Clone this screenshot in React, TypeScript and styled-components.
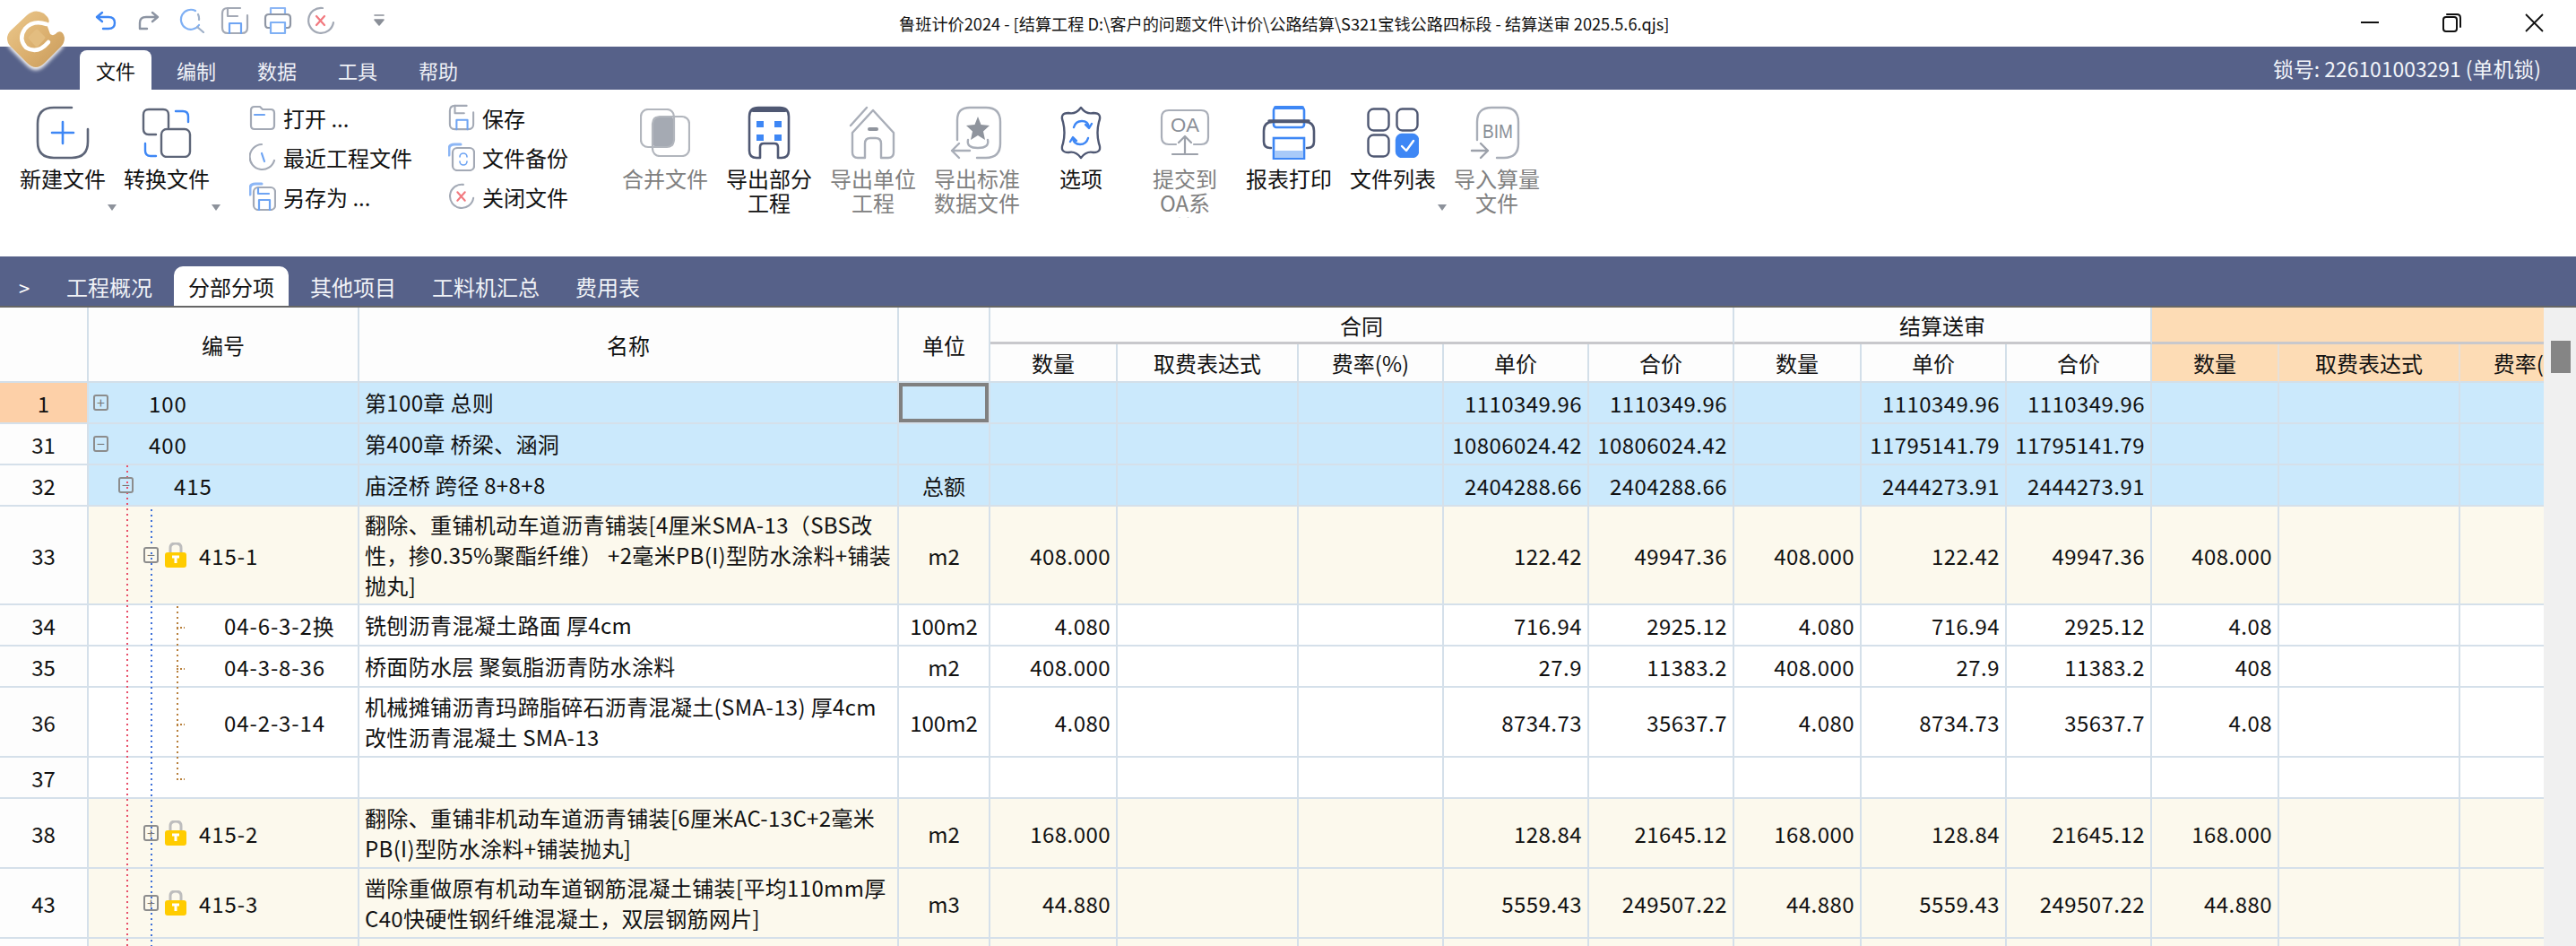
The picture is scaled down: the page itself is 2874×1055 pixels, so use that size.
import React from "react";
import styled, { createGlobalStyle } from "styled-components";

const BAR = "#566189";
const INK = "#5d6578";
const SOFT = "#a9aeb8";
const BLUE = "#3e87f5";
const FONT = `"Noto Sans CJK SC", "Liberation Sans", sans-serif`;
const COLS = "99px 302px 602px 102px 142px 202px 162px 162px 162px 142px 162px 162px 142px 202px 162px";

const Global = createGlobalStyle`
  html, body { margin: 0; padding: 0; background: #fff; overflow: hidden; }
  * { box-sizing: border-box; }
`;

const Page = styled.div`
  position: relative;
  width: 2874px;
  height: 1055px;
  overflow: hidden;
  font-family: ${FONT};
  color: #111;
  display: flex;
  flex-direction: column;
`;

const Glyph = styled.svg`
  display: block;
  flex: none;
  fill: none;
  stroke-linecap: round;
  stroke-linejoin: round;
`;

const LogoMark = styled.svg`
  position: absolute;
  left: 0;
  top: 0;
  z-index: 3;
  filter: drop-shadow(0 3px 2px #fff);
`;

const TitleBar = styled.div`
  height: 52px;
  flex: none;
  display: flex;
  align-items: center;
  background: #fff;
`;
const QuickBar = styled.div`
  width: 1003px;
  flex: none;
  display: flex;
  align-items: center;
  padding: 0 0 6px 94px;
`;
const QuickSlot = styled.div`
  width: 48px;
  display: flex;
  justify-content: center;
`;
const QuickMore = styled.div`
  margin-left: 35px;
`;
const Title = styled.div`
  flex: 1;
  font-size: 18.2px;
  white-space: nowrap;
  color: #111;
  padding-bottom: 1px;
`;
const WindowControls = styled.div`
  display: flex;
  align-items: center;
  gap: 71px;
  padding: 0 36px 2px 0;
`;

const MenuBar = styled.div`
  height: 48px;
  flex: none;
  background: ${BAR};
  display: flex;
  align-items: flex-end;
  padding-left: 89px;
`;
const MenuTab = styled.div<{ $active?: boolean }>`
  width: 80px;
  height: 44px;
  margin-right: 10px;
  display: flex;
  align-items: center;
  justify-content: center;
  font-size: 22px;
  border-radius: 8px 8px 0 0;
  color: ${(p) => (p.$active ? "#111" : "#eef0f6")};
  background: ${(p) => (p.$active ? "#fff" : "transparent")};
`;
const LockNo = styled.div`
  margin-left: auto;
  height: 48px;
  display: flex;
  align-items: center;
  padding: 0 39px 0 0;
  color: #f2f5fa;
  font-size: 22.9px;
  white-space: nowrap;
`;

const Ribbon = styled.div`
  height: 186px;
  flex: none;
  background: #fff;
  display: flex;
  padding-left: 12px;
`;
const BigButton = styled.div<{ $off?: boolean }>`
  position: relative;
  width: 116px;
  flex: none;
  padding-top: 18px;
  display: flex;
  flex-direction: column;
  align-items: center;
  color: ${(p) => (p.$off ? "#808080" : "#111")};
`;
const BigIcon = styled.div`
  height: 59px;
  display: flex;
  align-items: center;
  justify-content: center;
`;
const BigLabel = styled.div<{ $w?: number; $clip?: boolean }>`
  width: ${(p) => p.$w ?? 100}px;
  margin-top: 8px;
  font-size: 24px;
  line-height: 27px;
  text-align: center;
  ${(p) => (p.$clip ? "height: 58px; overflow: hidden;" : "")}
`;
const Caret = styled.div`
  position: absolute;
  right: -2px;
  top: 128px;
  width: 0;
  height: 0;
  border-left: 5px solid transparent;
  border-right: 5px solid transparent;
  border-top: 7px solid #8d929b;
`;
const SmallColumn = styled.div<{ $w: number; $ml?: number }>`
  width: ${(p) => p.$w}px;
  margin-left: ${(p) => p.$ml ?? 0}px;
  flex: none;
  padding-top: 9px;
  display: flex;
  flex-direction: column;
`;
const SmallItem = styled.div`
  height: 44px;
  display: flex;
  align-items: center;
  gap: 8px;
  font-size: 24px;
  white-space: nowrap;
`;

const TabBar = styled.div`
  height: 57px;
  flex: none;
  background: ${BAR};
  border-bottom: 2px solid #666;
  display: flex;
  align-items: flex-end;
  gap: 8px;
  padding-left: 21px;
`;
const TabChevron = styled.div`
  width: 29px;
  height: 42px;
  color: #fff;
  font-size: 22px;
  display: flex;
  align-items: center;
`;
const SheetTab = styled.div<{ $active?: boolean }>`
  height: 44px;
  padding: 0 16px;
  display: flex;
  align-items: center;
  font-size: 24px;
  border-radius: 10px 10px 0 0;
  color: ${(p) => (p.$active ? "#111" : "#f0f2f7")};
  background: ${(p) => (p.$active ? "#fff" : "transparent")};
`;

const Workspace = styled.div`
  flex: 1;
  min-height: 0;
  display: flex;
`;
const Sheet = styled.div`
  width: 2838px;
  flex: none;
  overflow: hidden;
  background: #fff;
`;
const Scrollbar = styled.div`
  flex: 1;
  background: #f0f0f0;
  padding: 37px 6px 0 8px;
`;
const Thumb = styled.div`
  height: 36px;
  background: #858585;
`;

const HeaderGrid = styled.div`
  width: 2907px;
  height: 84px;
  display: grid;
  grid-template-columns: ${COLS};
  grid-template-rows: 41px 43px;
`;
const HeadCell = styled.div<{ $col: string; $row: string; $tone?: "peach"; $group?: boolean }>`
  grid-column: ${(p) => p.$col};
  grid-row: ${(p) => p.$row};
  display: flex;
  align-items: center;
  justify-content: center;
  font-size: 24px;
  white-space: nowrap;
  background: ${(p) => (p.$tone === "peach" ? "#fddcb5" : "#fdfdfd")};
  border-right: 2px solid ${(p) => (p.$tone === "peach" ? "#e7e0d8" : "#d3dfe9")};
  border-bottom: ${(p) => (p.$group ? "3px solid #c8c8cc" : "2px solid #d3dfe9")};
`;

const Rows = styled.div`
  position: relative;
  width: 2907px;
`;
const Row = styled.div<{ $h: number }>`
  display: grid;
  grid-template-columns: ${COLS};
  height: ${(p) => p.$h}px;
`;
const TONES = { blue: "#cbe9fc", cream: "#fcf9ed", white: "#ffffff" };
type Tone = keyof typeof TONES;
const Cell = styled.div<{ $tone: Tone }>`
  position: relative;
  min-width: 0;
  background: ${(p) => TONES[p.$tone]};
  border-right: 2px solid #d5e0ea;
  border-bottom: 2px solid #d5e0ea;
  font-size: 24px;
  white-space: nowrap;
  display: flex;
  align-items: center;
`;
const IndexCell = styled(Cell)<{ $picked?: boolean }>`
  justify-content: center;
  background: ${(p) => (p.$picked ? "#fdd0a8" : "#fdfdfd")};
`;
const CodeCell = styled(Cell)<{ $level: number }>`
  padding-left: ${(p) => 5 + p.$level * 28}px;
`;
const Toggle = styled.div<{ $hidden?: boolean }>`
  position: relative;
  z-index: 2;
  width: 17px;
  height: 18px;
  flex: none;
  margin-right: 7px;
  border: 2px solid ${(p) => (p.$hidden ? "transparent" : "#8c8c8c")};
  border-radius: 3px;
  color: #777;
  font-size: 16px;
  line-height: 13px;
  text-align: center;
`;
const LockSlot = styled.div`
  position: relative;
  z-index: 2;
  width: 24px;
  height: 28px;
  flex: none;
  margin-right: 14px;
`;
const Code = styled.span`
  position: relative;
  z-index: 2;
  letter-spacing: 0.9px;
`;
const NameCell = styled(Cell)`
  flex-direction: column;
  align-items: flex-start;
  justify-content: center;
  padding-left: 6px;
  overflow: hidden;
`;
const NameLine = styled.div`
  line-height: 34px;
  letter-spacing: 0.35px;
`;
const UnitCell = styled(Cell)<{ $focus?: boolean }>`
  justify-content: center;
  box-shadow: ${(p) => (p.$focus ? "inset 0 0 0 4px #808080" : "none")};
`;
const NumCell = styled(Cell)`
  justify-content: flex-end;
  padding-right: 6px;
  letter-spacing: 0.45px;
`;
const Guide = styled.div<{ $x: number; $top: number; $h: number; $c: string }>`
  position: absolute;
  z-index: 1;
  left: ${(p) => p.$x}px;
  top: ${(p) => p.$top}px;
  width: 2px;
  height: ${(p) => p.$h}px;
  background: repeating-linear-gradient(to bottom, ${(p) => p.$c} 0 2px, transparent 2px 6px);
`;
const GuideTick = styled.div<{ $top: number }>`
  position: absolute;
  z-index: 1;
  left: 197px;
  top: ${(p) => p.$top}px;
  width: 9px;
  height: 2px;
  background: repeating-linear-gradient(to right, #b8803c 0 2px, transparent 2px 4px);
`;

/* ---------- icons ---------- */
const Undo = () => (
  <Glyph width="24" height="22" viewBox="0 0 24 22" stroke={BLUE} strokeWidth="2.4">
    <path d="M8 2L2 7L8 12M2 7H15Q22 7 22 13.5Q22 20 15 20H9" />
  </Glyph>
);
const Redo = () => (
  <Glyph width="24" height="22" viewBox="0 0 24 22" stroke="#8c94a2" strokeWidth="2.4">
    <path d="M16 2L22 7L16 12M22 7H9Q2 7 2 13.5V20H10" />
  </Glyph>
);
const Search = () => (
  <Glyph width="28" height="28" viewBox="0 0 28 28" stroke="#7fb0f4" strokeWidth="2.2">
    <path d="M18 3A11 11 0 1 0 22 19" />
    <path d="M21 7A11 11 0 0 1 22 13M20 21L27 27" stroke="#9fb0c8" />
  </Glyph>
);
const SaveGlyph = ({ s = 32 }: { s?: number }) => (
  <Glyph width={s} height={s} viewBox="0 0 32 32" stroke="#a3a9b5" strokeWidth="2.2">
    <path d="M22 2H8Q2 2 2 8V24Q2 30 8 30H24Q30 30 30 24V10" />
    <path d="M8 2V11H19" />
    <path d="M10 30V19H23V30" stroke="#6ea4f3" />
  </Glyph>
);
const PrintSmall = () => (
  <Glyph width="32" height="32" viewBox="0 0 32 32" stroke="#8f96a4" strokeWidth="2.2">
    <path d="M8 9V2H24V9" stroke="#8cb6f5" />
    <path d="M7 24H5Q2 24 2 20V13Q2 9 6 9H26Q30 9 30 13V20Q30 24 27 24H25" />
    <path d="M8 18H24V30H8Z" stroke="#7fb0f4" />
  </Glyph>
);
const CloseGlyph = ({ s = 32 }: { s?: number }) => (
  <Glyph width={s} height={s} viewBox="0 0 32 32" stroke="#a3a9b5" strokeWidth="2.2">
    <path d="M18 2A14 14 0 1 0 30 18" />
    <path d="M11 11L20 21M20 11L11 21" stroke="#f2797f" />
  </Glyph>
);
const MoreCaret = () => (
  <Glyph width="12" height="14" viewBox="0 0 12 14" stroke="#8a8f98" strokeWidth="1.6">
    <path d="M1 1H11" />
    <path d="M1 6H11L6 12Z" fill="#8a8f98" />
  </Glyph>
);
const Minimize = () => (
  <Glyph width="20" height="4" viewBox="0 0 20 4" stroke="#111" strokeWidth="2">
    <path d="M0 2H20" strokeLinecap="butt" />
  </Glyph>
);
const Restore = () => (
  <Glyph width="21" height="21" viewBox="0 0 21 21" stroke="#111" strokeWidth="2">
    <rect x="1" y="4" width="15" height="16" rx="3" />
    <path d="M5 1H16Q20 1 20 5V15" />
  </Glyph>
);
const CloseX = () => (
  <Glyph width="21" height="21" viewBox="0 0 21 21" stroke="#111" strokeWidth="1.8">
    <path d="M1 1L20 20M20 1L1 20" strokeLinecap="butt" />
  </Glyph>
);

const NewFile = () => (
  <Glyph width="60" height="60" viewBox="0 0 60 60" stroke={INK} strokeWidth="2.6">
    <path d="M40 2H20Q2 2 2 20V40Q2 58 20 58H40Q58 58 58 40V26" />
    <path d="M30 18V42M18 30H42" stroke={BLUE} />
  </Glyph>
);
const Convert = () => (
  <Glyph width="56" height="56" viewBox="0 0 56 56" stroke={INK} strokeWidth="2.4">
    <path d="M30 22V8Q30 2 24 2H8Q2 2 2 8V24Q2 30 8 30H16" />
    <path d="M38 4H46Q52 4 52 10V16M4 40V48Q4 54 10 54H16" stroke={BLUE} />
    <rect x="22" y="24" width="32" height="31" rx="6" />
  </Glyph>
);
const Merge = () => (
  <Glyph width="56" height="54" viewBox="0 0 56 54" stroke="#b2b6bd" strokeWidth="2.2">
    <rect x="14" y="9" width="24" height="34" rx="5" fill="#a5aab3" stroke="none" />
    <rect x="1" y="1" width="37" height="42" rx="8" />
    <rect x="14" y="9" width="41" height="44" rx="8" />
  </Glyph>
);
const ExportPart = () => (
  <Glyph width="48" height="60" viewBox="0 0 48 60" stroke="#4f5873" strokeWidth="2.6">
    <path d="M2 12Q2 2 12 2H36Q46 2 46 12V50Q46 58 38 58H34V46Q34 42 30 42H18Q14 42 14 46V58H10Q2 58 2 50Z" />
    <path d="M6 5H42" strokeWidth="4" />
    <g fill={BLUE} stroke="none">
      <rect x="10" y="17" width="8" height="7" />
      <rect x="30" y="17" width="8" height="7" />
      <rect x="10" y="32" width="8" height="7" />
      <rect x="30" y="32" width="8" height="7" />
    </g>
  </Glyph>
);
const House = () => (
  <Glyph width="54" height="60" viewBox="0 0 54 60" stroke={SOFT} strokeWidth="2.4">
    <path d="M4 30L27 5L50 30V52Q50 58 44 58H36V42Q36 36 30 36H24Q18 36 18 42V58H10Q4 58 4 52Z" />
    <path d="M2 22L20 2" />
    <path d="M23 26H31" strokeWidth="4" stroke="#8f949d" />
  </Glyph>
);
const ExportStd = () => (
  <Glyph width="60" height="60" viewBox="0 0 60 60" stroke={SOFT} strokeWidth="2.4">
    <path d="M8 38V16Q8 2 22 2H40Q56 2 56 18V42Q56 58 40 58H30" />
    <path d="M31 12L34.5 21L44 22L37 28.5L39 38L31 33L23 38L25 28.5L18 22L27.5 21Z" fill="#8f949d" stroke="none" />
    <path d="M20 38Q18 47 31 47Q44 47 42 38" />
    <path d="M2 50H22M2 50L10 42M2 50L10 58" />
  </Glyph>
);
const Options = () => (
  <Glyph width="52" height="60" viewBox="0 0 52 60" stroke="#4f5873" strokeWidth="2.4">
    <path d="M26 2Q32 10 40 8Q50 8 46 18Q43 30 46 42Q50 52 40 52Q32 50 26 58Q20 50 12 52Q2 52 6 42Q9 30 6 18Q2 8 12 8Q20 10 26 2Z" />
    <path d="M18 24Q20 17 27 17Q34 17 35 24M31 21L35 25L38 20M34 36Q32 43 25 43Q18 43 17 36M21 39L17 35L14 40" stroke={BLUE} />
  </Glyph>
);
const IconWord = styled.text`
  font-family: "Liberation Sans", sans-serif;
  fill: #8a8f98;
  stroke: none;
`;
const OaIcon = () => (
  <Glyph width="56" height="54" viewBox="0 0 56 54" stroke={SOFT} strokeWidth="2.2">
    <path d="M18 40H10Q2 40 2 32V10Q2 2 10 2H46Q54 2 54 10V32Q54 40 46 40H38" />
    <IconWord x="28" y="26" fontSize="22" textAnchor="middle" textLength="32" lengthAdjust="spacingAndGlyphs">OA</IconWord>
    <path d="M28 50V32M21 38L28 31L35 38M14 51H42" stroke="#9ca1aa" />
  </Glyph>
);
const PrintBig = () => (
  <Glyph width="60" height="60" viewBox="0 0 60 60" stroke="#4f5873" strokeWidth="2.6">
    <rect x="13" y="2" width="34" height="22" rx="3" fill="#fff" stroke={BLUE} />
    <path d="M15 2H45" stroke={BLUE} strokeWidth="4" />
    <path d="M10 47H9Q2 47 2 40V28Q2 18 12 18H48Q58 18 58 28V40Q58 47 51 47H50" />
    <path d="M8 17H52" strokeWidth="3.5" />
    <rect x="13" y="36" width="34" height="23" fill="#fff" stroke={BLUE} strokeLinejoin="miter" />
    <rect x="14" y="50" width="32" height="8" fill="#a8caf9" stroke="none" />
  </Glyph>
);
const FileList = () => (
  <Glyph width="58" height="56" viewBox="0 0 58 56" stroke="#4f5873" strokeWidth="2.4">
    <rect x="1.5" y="1.5" width="23" height="24" rx="6" />
    <rect x="33.5" y="1.5" width="23" height="24" rx="6" />
    <rect x="1.5" y="30.5" width="23" height="24" rx="6" />
    <rect x="33" y="30" width="24" height="25" rx="6" fill={BLUE} stroke={BLUE} />
    <path d="M39 43L44 48L52 37" stroke="#fff" />
  </Glyph>
);
const Bim = () => (
  <Glyph width="60" height="60" viewBox="0 0 60 60" stroke={SOFT} strokeWidth="2.4">
    <path d="M8 38V18Q8 2 24 2H38Q54 2 54 18V42Q54 58 38 58H30" />
    <IconWord x="31" y="36" fontSize="22" textAnchor="middle" textLength="34" lengthAdjust="spacingAndGlyphs">BIM</IconWord>
    <path d="M2 50H20M12 42L20 50L12 58" stroke="#9ca1aa" />
  </Glyph>
);
const OpenDoc = () => (
  <Glyph width="30" height="30" viewBox="0 0 30 30" stroke="#a3a9b5" strokeWidth="2.2">
    <path d="M2 7Q2 3 6 3H12L15 6H24Q28 6 28 10V24Q28 28 24 28H6Q2 28 2 24Z" />
    <path d="M6 12H17" stroke="#6ea4f3" />
  </Glyph>
);
const Recent = () => (
  <Glyph width="30" height="32" viewBox="0 0 30 32" stroke="#a3a9b5" strokeWidth="2.2">
    <path d="M14 2A14 14 0 1 0 28 20" />
    <path d="M14 12L17 21" stroke="#6ea4f3" />
  </Glyph>
);
const Backup = () => (
  <Glyph width="30" height="32" viewBox="0 0 30 32" stroke="#a3a9b5" strokeWidth="2.2">
    <rect x="5" y="6" width="24" height="25" rx="5" />
    <path d="M1 14V7Q1 2 7 2H14" stroke="#8cb6f5" strokeWidth="3" />
    <path d="M13 16A4 4 0 0 1 21 16M21 21A4 4 0 0 1 13 21" stroke="#6ea4f3" strokeWidth="1.6" />
  </Glyph>
);
const SaveAs = () => (
  <Glyph width="30" height="32" viewBox="0 0 30 32" stroke="#a3a9b5" strokeWidth="2.2">
    <rect x="5" y="6" width="24" height="25" rx="5" />
    <path d="M1 14V7Q1 2 7 2H14" stroke="#8cb6f5" strokeWidth="3" />
    <path d="M10 7V13H22M11 31V20H23V31" stroke="#6ea4f3" />
  </Glyph>
);
const Padlock = () => (
  <Glyph width="24" height="28" viewBox="0 0 24 28">
    <path d="M6 12V6Q6 1 12 1Q18 1 18 6V12" stroke="#bdbdbd" strokeWidth="3" />
    <rect x="0" y="11" width="24" height="17" rx="3" fill="#ffcc00" />
    <path d="M8 16H16M12 16V23" stroke="#fff" strokeWidth="3" strokeLinecap="butt" />
  </Glyph>
);
const Logo = () => (
  <LogoMark width="80" height="84" viewBox="0 0 80 84">
    <defs>
      <linearGradient id="gold" x1="0" y1="0" x2="1" y2="1">
        <stop offset="0" stopColor="#ecc98d" />
        <stop offset="0.6" stopColor="#d9ad6c" />
        <stop offset="1" stopColor="#c69a5c" />
      </linearGradient>
    </defs>
    <path
      d="M8 43Q8 38 12 34L30 17Q39 9 49 15L53 19Q57 25 52 27L56 38Q60 41 64 36Q70 33 72 42Q72 48 68 52L50 70Q40 80 30 70L12 52Q8 48 8 43Z"
      fill="url(#gold)"
    />
    <path d="M52 27Q37 22 28 32Q20 43 29 53Q42 61 54 47" fill="none" stroke="#fff" strokeWidth="4.5" strokeLinecap="round" />
    <path d="M41 34L49 42L41 51L33 42Z" fill="#e3bd80" stroke="#e3bd80" strokeWidth="3" strokeLinejoin="round" />
  </LogoMark>
);

/* ---------- data ---------- */
type RowData = {
  idx: string;
  h: number;
  tone: Tone;
  level: number;
  toggle?: "+" | "-";
  lock?: boolean;
  code?: string;
  name?: string[];
  unit?: string;
  q1?: string;
  p1?: string;
  t1?: string;
  q2?: string;
  p2?: string;
  t2?: string;
  q3?: string;
};

const ROWS: RowData[] = [
  { idx: "1", h: 46, tone: "blue", level: 0, toggle: "+", code: "100", name: ["第100章 总则"], p1: "1110349.96", t1: "1110349.96", p2: "1110349.96", t2: "1110349.96" },
  { idx: "31", h: 46, tone: "blue", level: 0, toggle: "-", code: "400", name: ["第400章 桥梁、涵洞"], p1: "10806024.42", t1: "10806024.42", p2: "11795141.79", t2: "11795141.79" },
  { idx: "32", h: 46, tone: "blue", level: 1, toggle: "-", code: "415", name: ["庙泾桥 跨径 8+8+8"], unit: "总额", p1: "2404288.66", t1: "2404288.66", p2: "2444273.91", t2: "2444273.91" },
  { idx: "33", h: 110, tone: "cream", level: 2, toggle: "-", lock: true, code: "415-1", name: ["翻除、重铺机动车道沥青铺装[4厘米SMA-13（SBS改", "性，掺0.35%聚酯纤维） +2毫米PB(I)型防水涂料+铺装", "抛丸]"], unit: "m2", q1: "408.000", p1: "122.42", t1: "49947.36", q2: "408.000", p2: "122.42", t2: "49947.36", q3: "408.000" },
  { idx: "34", h: 46, tone: "white", level: 3, code: "04-6-3-2换", name: ["铣刨沥青混凝土路面 厚4cm"], unit: "100m2", q1: "4.080", p1: "716.94", t1: "2925.12", q2: "4.080", p2: "716.94", t2: "2925.12", q3: "4.08" },
  { idx: "35", h: 46, tone: "white", level: 3, code: "04-3-8-36", name: ["桥面防水层 聚氨脂沥青防水涂料"], unit: "m2", q1: "408.000", p1: "27.9", t1: "11383.2", q2: "408.000", p2: "27.9", t2: "11383.2", q3: "408" },
  { idx: "36", h: 78, tone: "white", level: 3, code: "04-2-3-14", name: ["机械摊铺沥青玛蹄脂碎石沥青混凝土(SMA-13) 厚4cm", "改性沥青混凝土 SMA-13"], unit: "100m2", q1: "4.080", p1: "8734.73", t1: "35637.7", q2: "4.080", p2: "8734.73", t2: "35637.7", q3: "4.08" },
  { idx: "37", h: 46, tone: "white", level: 3 },
  { idx: "38", h: 78, tone: "cream", level: 2, toggle: "+", lock: true, code: "415-2", name: ["翻除、重铺非机动车道沥青铺装[6厘米AC-13C+2毫米", "PB(I)型防水涂料+铺装抛丸]"], unit: "m2", q1: "168.000", p1: "128.84", t1: "21645.12", q2: "168.000", p2: "128.84", t2: "21645.12", q3: "168.000" },
  { idx: "43", h: 78, tone: "cream", level: 2, toggle: "+", lock: true, code: "415-3", name: ["凿除重做原有机动车道钢筋混凝土铺装[平均110mm厚", "C40快硬性钢纤维混凝土，双层钢筋网片]"], unit: "m3", q1: "44.880", p1: "5559.43", t1: "249507.22", q2: "44.880", p2: "5559.43", t2: "249507.22", q3: "44.880" },
  { idx: "", h: 46, tone: "cream", level: 2 },
];

type Big = { label: string; icon: React.ReactNode; off?: boolean; caret?: boolean; w?: number };
const BIG_LEFT: Big[] = [
  { label: "新建文件", icon: <NewFile />, caret: true },
  { label: "转换文件", icon: <Convert />, caret: true },
];
const BIG_RIGHT: Big[] = [
  { label: "合并文件", icon: <Merge />, off: true },
  { label: "导出部分工程", icon: <ExportPart /> },
  { label: "导出单位工程", icon: <House />, off: true },
  { label: "导出标准数据文件", icon: <ExportStd />, off: true },
  { label: "选项", icon: <Options /> },
  { label: "提交到OA系统", icon: <OaIcon />, off: true, w: 76 },
  { label: "报表打印", icon: <PrintBig /> },
  { label: "文件列表", icon: <FileList />, caret: true },
  { label: "导入算量文件", icon: <Bim />, off: true },
];

const HEAD: { t?: string; col: string; row: string; tone?: "peach"; group?: boolean }[] = [
  { col: "1", row: "1 / 3" },
  { t: "编号", col: "2", row: "1 / 3" },
  { t: "名称", col: "3", row: "1 / 3" },
  { t: "单位", col: "4", row: "1 / 3" },
  { t: "合同", col: "5 / 10", row: "1", group: true },
  { t: "结算送审", col: "10 / 13", row: "1", group: true },
  { col: "13 / 16", row: "1", tone: "peach", group: true },
  { t: "数量", col: "5", row: "2" },
  { t: "取费表达式", col: "6", row: "2" },
  { t: "费率(%)", col: "7", row: "2" },
  { t: "单价", col: "8", row: "2" },
  { t: "合价", col: "9", row: "2" },
  { t: "数量", col: "10", row: "2" },
  { t: "单价", col: "11", row: "2" },
  { t: "合价", col: "12", row: "2" },
  { t: "数量", col: "13", row: "2", tone: "peach" },
  { t: "取费表达式", col: "14", row: "2", tone: "peach" },
  { t: "费率(%)", col: "15", row: "2", tone: "peach" },
];

const BigBtn = ({ b }: { b: Big }) => (
  <BigButton $off={b.off}>
    <BigIcon>{b.icon}</BigIcon>
    <BigLabel $w={b.w} $clip={!!b.w}>{b.label}</BigLabel>
    {b.caret && <Caret />}
  </BigButton>
);

export default function App() {
  return (
    <Page>
      <Global />
      <Logo />
      <TitleBar>
        <QuickBar>
          <QuickSlot><Undo /></QuickSlot>
          <QuickSlot><Redo /></QuickSlot>
          <QuickSlot><Search /></QuickSlot>
          <QuickSlot><SaveGlyph /></QuickSlot>
          <QuickSlot><PrintSmall /></QuickSlot>
          <QuickSlot><CloseGlyph /></QuickSlot>
          <QuickMore><MoreCaret /></QuickMore>
        </QuickBar>
        <Title>鲁班计价2024 - [结算工程 D:\客户的问题文件\计价\公路结算\S321宝钱公路四标段 - 结算送审 2025.5.6.qjs]</Title>
        <WindowControls>
          <Minimize />
          <Restore />
          <CloseX />
        </WindowControls>
      </TitleBar>

      <MenuBar>
        <MenuTab $active>文件</MenuTab>
        <MenuTab>编制</MenuTab>
        <MenuTab>数据</MenuTab>
        <MenuTab>工具</MenuTab>
        <MenuTab>帮助</MenuTab>
        <LockNo>锁号: 226101003291 (单机锁)</LockNo>
      </MenuBar>

      <Ribbon>
        {BIG_LEFT.map((b) => <BigBtn key={b.label} b={b} />)}
        <SmallColumn $w={222} $ml={34}>
          <SmallItem><OpenDoc />打开 ...</SmallItem>
          <SmallItem><Recent />最近工程文件</SmallItem>
          <SmallItem><SaveAs />另存为 ...</SmallItem>
        </SmallColumn>
        <SmallColumn $w={184}>
          <SmallItem><SaveGlyph s={30} />保存</SmallItem>
          <SmallItem><Backup />文件备份</SmallItem>
          <SmallItem><CloseGlyph s={30} />关闭文件</SmallItem>
        </SmallColumn>
        {BIG_RIGHT.map((b) => <BigBtn key={b.label} b={b} />)}
      </Ribbon>

      <TabBar>
        <TabChevron>&gt;</TabChevron>
        <SheetTab>工程概况</SheetTab>
        <SheetTab $active>分部分项</SheetTab>
        <SheetTab>其他项目</SheetTab>
        <SheetTab>工料机汇总</SheetTab>
        <SheetTab>费用表</SheetTab>
      </TabBar>

      <Workspace>
        <Sheet>
          <HeaderGrid>
            {HEAD.map((h, i) => (
              <HeadCell key={i} $col={h.col} $row={h.row} $tone={h.tone} $group={h.group}>{h.t}</HeadCell>
            ))}
          </HeaderGrid>
          <Rows>
            <Guide $x={141} $top={92} $h={600} $c="#e8506a" />
            <Guide $x={168} $top={141} $h={500} $c="#3e70d8" />
            <Guide $x={197} $top={249} $h={193} $c="#b8803c" />
            <GuideTick $top={272} />
            <GuideTick $top={318} />
            <GuideTick $top={380} />
            <GuideTick $top={441} />
            {ROWS.map((r, i) => (
              <Row key={i} $h={r.h}>
                <IndexCell $tone={r.tone} $picked={r.idx === "1"}>{r.idx}</IndexCell>
                <CodeCell $tone={r.tone} $level={r.level}>
                  <Toggle $hidden={!r.toggle}>{r.toggle === "-" ? "−" : r.toggle}</Toggle>
                  <LockSlot>{r.lock && <Padlock />}</LockSlot>
                  {r.code && <Code>{r.code}</Code>}
                </CodeCell>
                <NameCell $tone={r.tone}>
                  {r.name?.map((l) => <NameLine key={l}>{l}</NameLine>)}
                </NameCell>
                <UnitCell $tone={r.tone} $focus={r.idx === "1"}>{r.unit}</UnitCell>
                <NumCell $tone={r.tone}>{r.q1}</NumCell>
                <NumCell $tone={r.tone} />
                <NumCell $tone={r.tone} />
                <NumCell $tone={r.tone}>{r.p1}</NumCell>
                <NumCell $tone={r.tone}>{r.t1}</NumCell>
                <NumCell $tone={r.tone}>{r.q2}</NumCell>
                <NumCell $tone={r.tone}>{r.p2}</NumCell>
                <NumCell $tone={r.tone}>{r.t2}</NumCell>
                <NumCell $tone={r.tone}>{r.q3}</NumCell>
                <NumCell $tone={r.tone} />
                <NumCell $tone={r.tone} />
              </Row>
            ))}
          </Rows>
        </Sheet>
        <Scrollbar>
          <Thumb />
        </Scrollbar>
      </Workspace>
    </Page>
  );
}
